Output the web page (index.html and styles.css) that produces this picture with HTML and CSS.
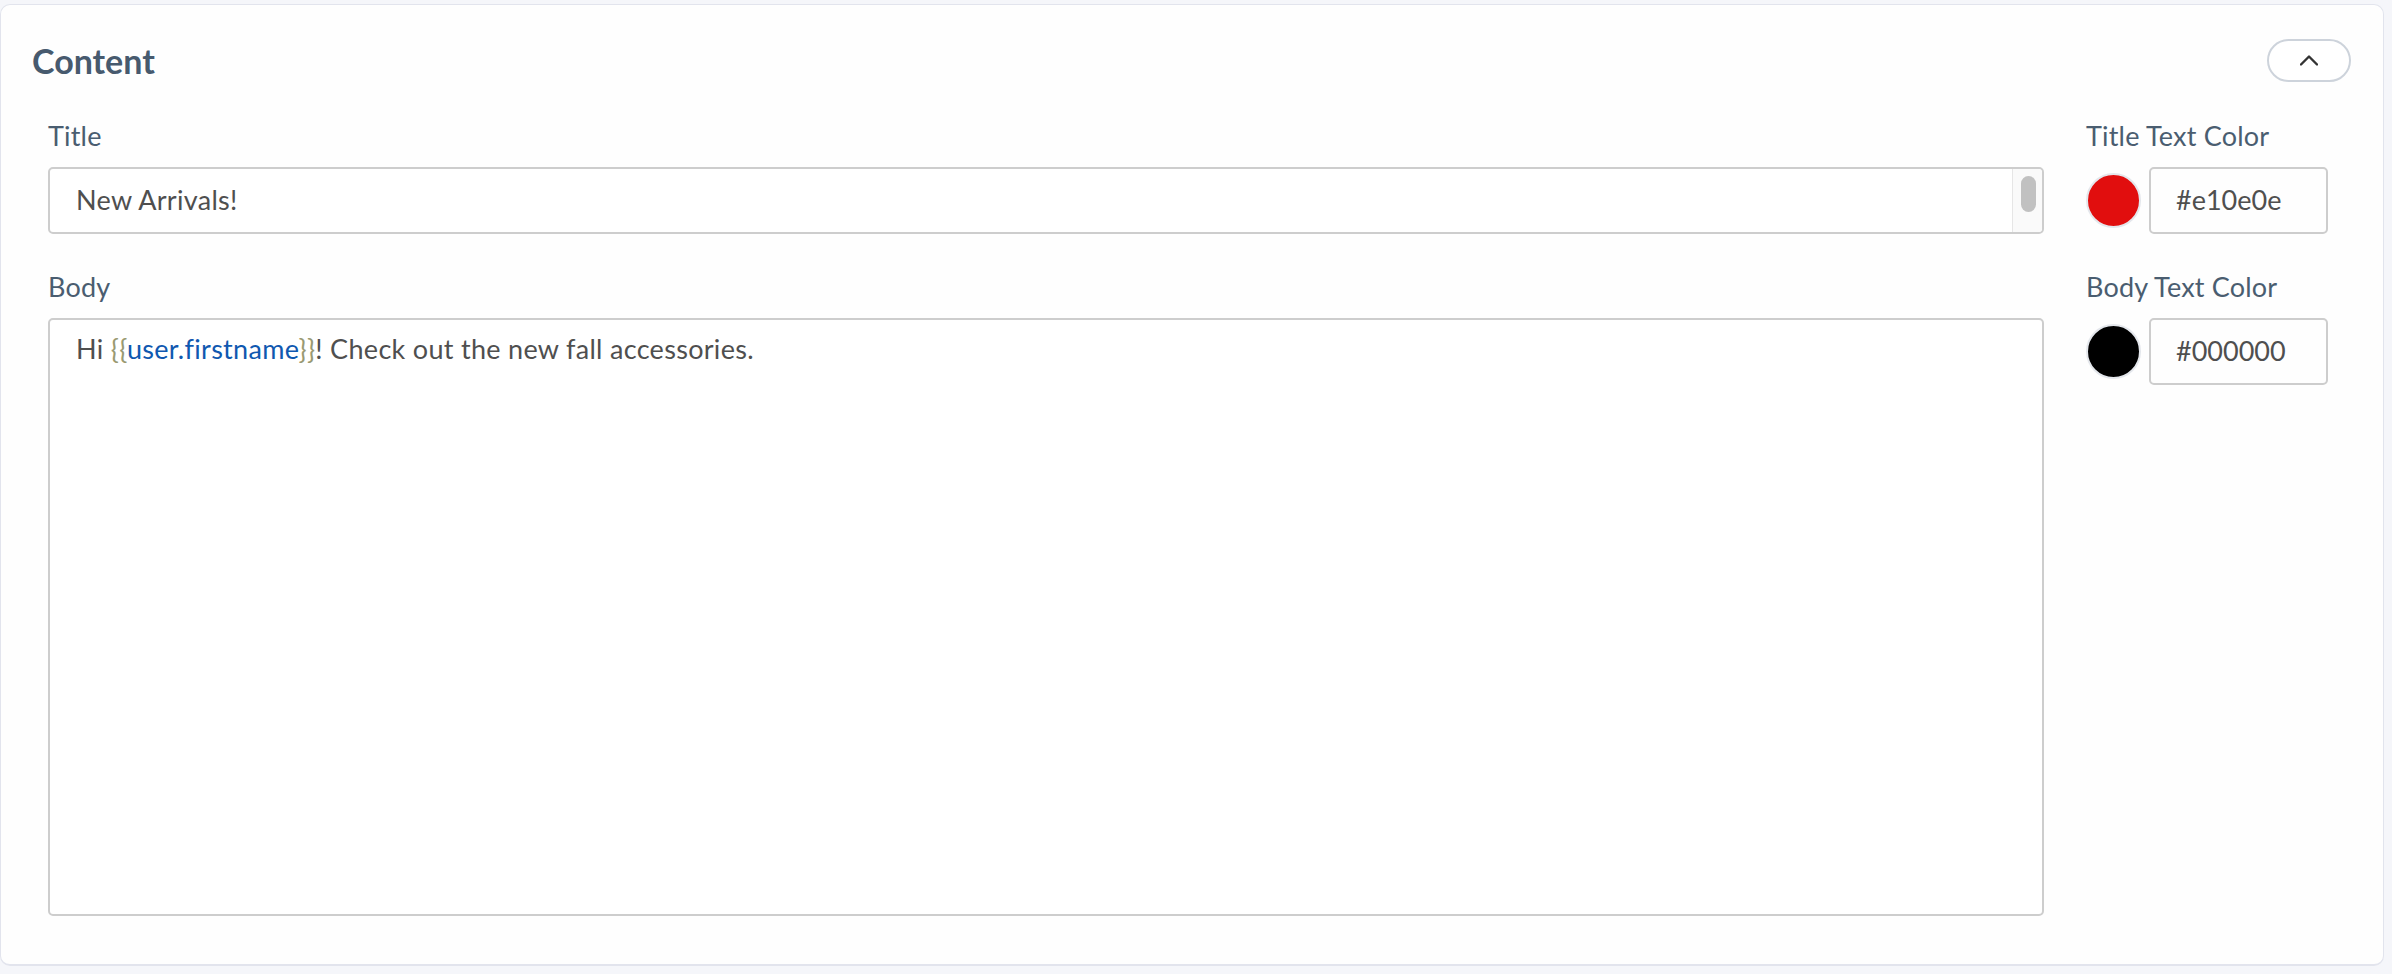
FILE: index.html
```html
<!DOCTYPE html>
<html lang="en">
<head>
<meta charset="utf-8">
<title>Content</title>
<link rel="stylesheet" href="styles.css">
</head>
<body>
<div class="page">
  <section class="card">
    <header class="card-header">
      <h2 class="card-title">Content</h2>
      <button class="collapse-btn" type="button" aria-label="Collapse">
        <svg width="18" height="12" viewBox="0 0 18 12"><polyline points="1,10.5 9,2.5 17,10.5" fill="none" stroke="#333" stroke-width="2.4" stroke-linecap="round" stroke-linejoin="round"/></svg>
      </button>
    </header>
    <div class="fields">
      <label class="label">Title</label>
      <label class="label">Title Text Color</label>

      <div class="field title-field">
        <div class="field-text">New Arrivals!</div>
        <div class="scroll-track"><div class="scroll-thumb"></div></div>
      </div>
      <div class="color-row">
        <span class="swatch swatch-red"></span>
        <div class="hex-input">#e10e0e</div>
      </div>

      <label class="label label-gap">Body</label>
      <label class="label label-gap">Body Text Color</label>

      <div class="field body-field">
        <div class="field-text">Hi <span class="brace">{{</span><span class="var">user.firstname</span><span class="brace">}}</span>! Check out the new fall accessories.</div>
      </div>
      <div class="color-row">
        <span class="swatch swatch-black"></span>
        <div class="hex-input">#000000</div>
      </div>
    </div>
  </section>
</div>
</body>
</html>
```

FILE: styles.css
```css
html, body {
  margin: 0;
  padding: 0;
  background: #f5f6fa;
  font-family: Lato, "Open Sans", "Liberation Sans", sans-serif;
}

.page {
  padding: 4px 8px 8px 0;
}

.card {
  box-sizing: border-box;
  width: 2384px;
  height: 962px;
  background: #fefefe;
  border: 1px solid #e2e4ed;
  border-bottom-width: 2px;
  border-radius: 10px;
}

.card-header {
  display: flex;
  align-items: center;
  justify-content: space-between;
  padding: 34px 32px 0 31px;
  height: 43px;
}

.card-title {
  margin: 0;
  font-size: 34px;
  line-height: 43px;
  font-weight: 700;
  color: #475a6e;
}

.collapse-btn {
  box-sizing: border-box;
  width: 84px;
  height: 43px;
  border: 2px solid #cdd3db;
  border-radius: 22px;
  background: #ffffff;
  display: flex;
  align-items: center;
  justify-content: center;
  padding: 0;
  padding-bottom: 2px;
}

.fields {
  display: grid;
  grid-template-columns: 1996px 242px;
  column-gap: 42px;
  padding: 38px 0 0 47px;
  align-items: start;
}

.label {
  display: block;
  font-size: 27px;
  line-height: 32px;
  letter-spacing: 0.2px;
  color: #4a5d70;
  margin-bottom: 15px;
}

.label-gap {
  margin-top: 37px;
}

.field {
  box-sizing: border-box;
  border: 2px solid #cdcdcd;
  border-radius: 5px;
  background: #fff;
  display: flex;
}

.title-field {
  height: 67px;
}

.body-field {
  height: 598px;
}

.field-text {
  flex: 1;
  font-size: 27px;
  line-height: 32px;
  letter-spacing: 0.3px;
  color: #4f4f4f;
  padding: 13px 24px 0 26px;
}

.title-field .field-text {
  padding-top: 15px;
}

.brace {
  color: #9a9a72;
}

.var {
  color: #0f58b0;
}

.scroll-track {
  box-sizing: border-box;
  width: 30px;
  border-left: 1px solid #e6e6e6;
  background: #fafafa;
  border-radius: 0 4px 4px 0;
  padding: 7px 5px 0 8px;
}

.scroll-thumb {
  width: 15px;
  height: 36px;
  border-radius: 8px;
  background: #c1c1c1;
}

.color-row {
  display: flex;
  align-items: center;
  height: 67px;
}

.swatch {
  box-sizing: border-box;
  width: 55px;
  height: 55px;
  border-radius: 50%;
  border: 2px solid #e4e7ec;
  margin-right: 8px;
  flex: none;
}

.swatch-red {
  background: #e10e0e;
}

.swatch-black {
  background: #000000;
}

.hex-input {
  box-sizing: border-box;
  width: 179px;
  height: 67px;
  border: 2px solid #cdcdcd;
  border-radius: 5px;
  font-size: 27px;
  line-height: 32px;
  color: #4f4f4f;
  padding: 15px 10px 0 25px;
}
```
